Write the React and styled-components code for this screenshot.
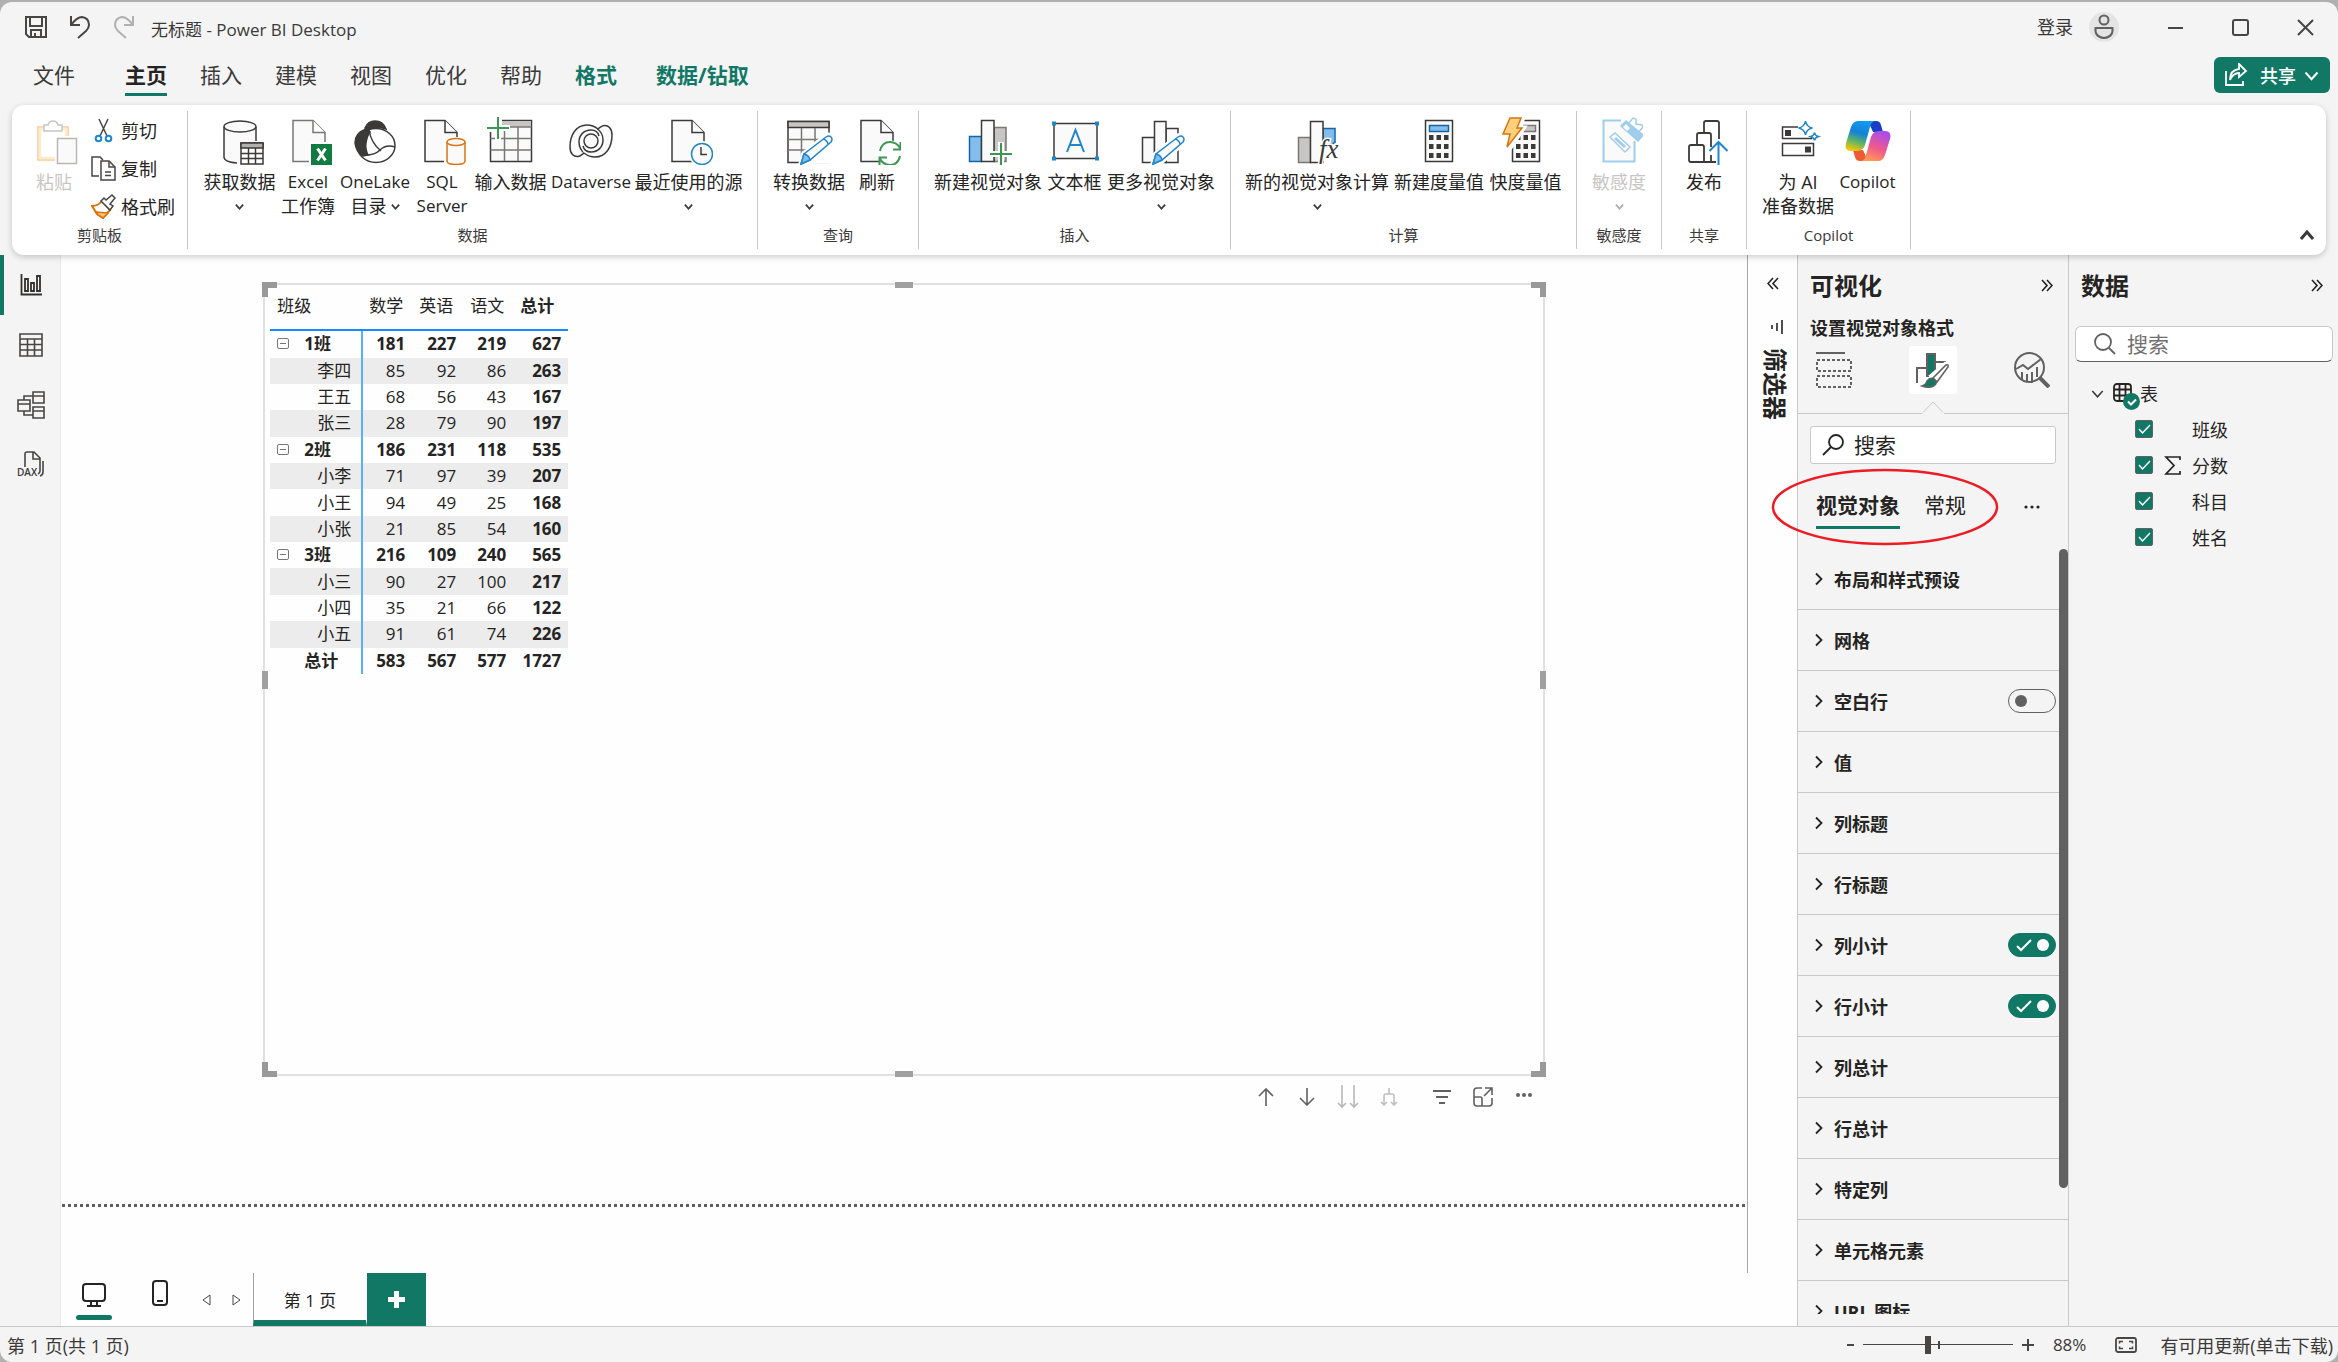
import React from 'react'
import styled, { createGlobalStyle, css } from 'styled-components'

const GREEN = '#117865'
const INK = '#252423'
const LINE = '#c8c8c8'

const GlobalStyle = createGlobalStyle`
  * { box-sizing: border-box; }
  body {
    margin: 0;
    background: #b0b0b0;
    color: ${INK};
    font-family: "Open Sans", "Noto Sans CJK SC", sans-serif;
    font-size: 18px;
  }
  button, input {
    font: inherit;
    color: inherit;
    margin: 0;
    padding: 0;
    border: none;
    background: none;
  }
  svg { display: block; flex: none; }
`

const Window = styled.div`
  display: flex;
  flex-direction: column;
  height: calc(100vh - 2px);
  margin-top: 2px;
  border-radius: 12px;
  background: #f4f4f4;
  overflow: hidden;
`

/* ---------- title bar ---------- */

const TitleBar = styled.header`
  display: flex;
  justify-content: space-between;
  padding: 13px 24px 18px 24px;
`

const QuickTools = styled.div`
  display: flex;
  align-items: flex-end;
  gap: 20px;
  height: 24px;
`

const AppTitle = styled.span`
  margin-left: -5px;
  line-height: 18px;
  font-size: 17px;
  color: #3b3a39;
`

const WindowTools = styled.div`
  display: flex;
  align-items: center;
  gap: 48px;
  height: 24px;
`

const SignIn = styled.button`
  display: flex;
  align-items: center;
  gap: 16px;
  line-height: 24px;
  color: #3b3a39;
`

/* ---------- menu ---------- */

const MenuRow = styled.div`
  display: flex;
  justify-content: space-between;
  align-items: flex-start;
  height: 48px;
  padding: 0 8px 0 33px;
`

const Menu = styled.nav`
  display: flex;
  gap: 33px;
`

const MenuTab = styled.button`
  height: 39px;
  border-bottom: 3px solid ${(p) => (p.$active ? GREEN : 'transparent')};
  font-size: 21px;
  line-height: 36px;
  font-weight: ${(p) => (p.$active || p.$context ? 700 : 400)};
  color: ${(p) => (p.$context ? GREEN : '#3b3a39')};
  ${(p) => p.$context === 'last' && css`margin-left: 6px;`}
  ${(p) => p.$first && css`margin-right: 17px;`}
  ${(p) => p.$active && css`color: ${INK};`}
`

const ShareButton = styled.button`
  display: flex;
  align-items: center;
  gap: 8px;
  height: 36px;
  padding: 0 11px 0 10px;
  border-radius: 6px;
  background: ${GREEN};
  color: #fff;
  font-weight: 500;
  white-space: nowrap;
`

const ShareText = styled.span`
  margin-left: 4px;
`

/* ---------- ribbon ---------- */

const Ribbon = styled.section`
  position: relative;
  z-index: 2;
  display: flex;
  flex: none;
  height: 150px;
  margin: 0 12px;
  padding: 6px 0;
  border-radius: 12px;
  background: #fff;
  box-shadow: 0 2px 6px rgba(0, 0, 0, 0.2);
`

const Group = styled.div`
  display: flex;
  flex-direction: column;
  justify-content: space-between;
  align-items: center;
  padding: 0 12px 4px;
  border-right: 1px solid ${LINE};
`

const GroupItems = styled.div`
  display: flex;
`

const GroupName = styled.div`
  font-size: 15px;
  line-height: 20px;
  color: #3b3a39;
`

const BigButton = styled.button`
  display: flex;
  flex-direction: column;
  align-items: center;
  width: ${(p) => p.$w}px;
  padding-top: 6px;
  gap: 5px;
  line-height: 24px;
  white-space: nowrap;
  color: ${(p) => (p.disabled ? '#c8c6c4' : INK)};
`

const LabelLine = styled.span`
  display: flex;
  align-items: center;
  justify-content: center;
  gap: 4px;
  height: 24px;
`

const Latin = styled.span`
  font-size: 17px;
`

const SmallButtons = styled.div`
  display: flex;
  flex-direction: column;
  margin-left: 7px;
`

const SmallButton = styled.button`
  display: flex;
  align-items: center;
  gap: 5px;
  height: 38px;
  white-space: nowrap;
`

const CollapseButton = styled.button`
  align-self: flex-end;
  margin-left: auto;
  padding: 6px 12px 8px;
`

/* ---------- work area ---------- */

const Work = styled.div`
  display: flex;
  flex: 1;
  min-height: 0;
`

const SideNav = styled.nav`
  width: 61px;
  flex: none;
  border-right: 1px solid #eaeaea;
`

const SideButton = styled.button`
  display: flex;
  align-items: center;
  justify-content: center;
  width: 60px;
  height: 60px;
  padding-right: 2px;
  border-left: 4px solid ${(p) => (p.$active ? GREEN : 'transparent')};
`

const Center = styled.main`
  display: flex;
  flex-direction: column;
  flex: 1;
  min-width: 0;
  background: #fefefe;
`

const Canvas = styled.div`
  display: flex;
  flex-direction: column;
  flex: 1;
  border-right: 1px solid #a8a8a8;
`

const ReportPage = styled.div`
  display: flex;
  flex-direction: column;
  flex: 1;
  width: 76%;
  margin: 0 auto;
  padding: 28px 0 86px;
`

const PageEdge = styled.div`
  height: 3px;
  margin: 0 1px 66px;
  background: repeating-linear-gradient(90deg, #605e5c 0 3px, transparent 3px 6px);
`

const Visual = styled.div`
  position: relative;
  flex: 1;
  padding: 0 5px;
  border: 2px solid #e0e0e0;
`

const Handle = styled.i`
  position: absolute;
  width: ${(p) => (p.$corner ? 15 : p.$side ? 6 : 18)}px;
  height: ${(p) => (p.$corner ? 15 : p.$side ? 18 : 6)}px;
  ${(p) => p.$at}
  ${(p) =>
    p.$corner
      ? css`
          border: 0 solid #999;
          border-width: ${p.$corner};
        `
      : css`
          background: #a0a0a0;
        `}
`

const VisualTools = styled.div`
  display: flex;
  justify-content: flex-end;
  height: 42px;
`

const ToolButton = styled.button`
  display: flex;
  align-items: center;
  justify-content: center;
  width: 41px;
  margin-left: ${(p) => (p.$gap ? 12 : 0)}px;
`

/* ---------- matrix ---------- */

const Matrix = styled.table`
  height: 389px;
  border-collapse: collapse;
  table-layout: fixed;
  width: 298px;
  font-size: 17px;
  line-height: 22px;

  th, td { padding: 0 7px; text-align: right; font-weight: 400; white-space: nowrap; }
  thead th { height: 45px; padding-bottom: 3px; text-align: left; border-bottom: 2px solid #118dff; }
  thead th:last-child, tbody td:last-child { font-weight: 700; }
  tbody th { text-align: left; border-right: 2px solid #5aaeff; }
`

const MatrixRow = styled.tr`
  background: ${(p) => (p.$shaded ? '#ececec' : 'transparent')};
  && th, && td { ${(p) => p.$bold && css`font-weight: 700;`} }
`

const RowHead = styled.div`
  display: flex;
  align-items: center;
  gap: 15px;
  padding-left: ${(p) => p.$indent}px;
`

/* ---------- page tabs ---------- */

const PageBar = styled.div`
  display: flex;
  height: 53px;
`

const LayoutButton = styled.button`
  display: flex;
  flex-direction: column;
  align-items: center;
  justify-content: flex-end;
  gap: 8px;
  width: 66px;
  padding-bottom: 6px;
  &::after {
    content: '';
    width: 36px;
    height: 5px;
    border-radius: 3px;
    background: ${(p) => (p.$active ? GREEN : 'transparent')};
  }
`

const PageArrow = styled.button`
  display: flex;
  align-items: center;
  justify-content: center;
  width: 30px;
  padding-right: 3px;
`

const PageTab = styled.button`
  width: 114px;
  padding-top: 5px;
  border-left: 1px solid #a0a0a0;
  border-right: 1px solid #fff;
  border-bottom: 6px solid ${GREEN};
  font-size: 17px;
`

const AddPage = styled.button`
  display: flex;
  align-items: center;
  justify-content: center;
  width: 59px;
  background: ${GREEN};
`

/* ---------- panes ---------- */

const FilterPane = styled.aside`
  display: flex;
  flex-direction: column;
  align-items: center;
  width: 50px;
  flex: none;
  padding-top: 22px;
  background: #fefefe;
  border-right: 1px solid ${LINE};
`

const FilterTitle = styled.h2`
  margin: 14px 0 0;
  padding-left: 4px;
  font-size: 24px;
  line-height: 28px;
  font-weight: 700;
  writing-mode: vertical-rl;
  text-orientation: sideways;
`

const FilterGlyph = styled.div`
  margin-top: 30px;
  padding-left: 8px;
`

const Pane = styled.aside`
  position: relative;
  display: flex;
  flex-direction: column;
  width: ${(p) => p.$w}px;
  flex: none;
  padding-bottom: ${(p) => p.$bottom || 0}px;
  border-right: ${(p) => (p.$last ? 'none' : `1px solid ${LINE}`)};
`

const PaneHeader = styled.div`
  display: flex;
  align-items: center;
  justify-content: space-between;
  height: 61px;
  padding: 0 15px 0 12px;
`

const PaneTitle = styled.h2`
  margin: 0;
  font-size: 24px;
  line-height: 32px;
  font-weight: 700;
`

const PaneSubtitle = styled.h3`
  margin: 0;
  padding-left: 12px;
  font-size: 18px;
  line-height: 24px;
  font-weight: 700;
`

const ModeTabs = styled.div`
  position: relative;
  display: flex;
  justify-content: space-between;
  height: 74px;
  padding: 6px 12px 19px;
  border-bottom: 1px solid ${LINE};
`

const ModeTab = styled.button`
  display: flex;
  align-items: center;
  justify-content: center;
  width: 48px;
  height: 48px;
  border-radius: 3px;
  background: ${(p) => (p.$active ? '#fff' : 'transparent')};
`

const Caret = styled.svg`
  position: absolute;
  left: 50%;
  bottom: -1px;
  margin-left: -12px;
`

const SearchBox = styled.label`
  display: flex;
  align-items: center;
  gap: ${(p) => (p.$data ? 11 : 10)}px;
  height: ${(p) => (p.$data ? 36 : 38)}px;
  margin: ${(p) => (p.$data ? '10px 5px 0 6px' : '12px 12px 0')};
  padding-left: ${(p) => (p.$data ? 18 : 11)}px;
  border: 1px solid ${LINE};
  border-radius: ${(p) => (p.$data ? 6 : 3)}px;
  background: #fff;
  ${(p) => p.$data && css`border-bottom-color: #616161;`}

  input { flex: 1; width: 100%; min-width: 0; font-size: 21px; outline: none; }
  input::placeholder { color: ${(p) => (p.$data ? '#707070' : INK)}; opacity: 1; }
`

const FormatTabs = styled.div`
  display: flex;
  align-items: center;
  gap: 24px;
  height: 85px;
  padding: 0 28px 0 18px;
`

const FormatTab = styled.button`
  height: 45px;
  border-bottom: 3px solid ${(p) => (p.$active ? GREEN : 'transparent')};
  font-size: 21px;
  line-height: 40px;
  font-weight: ${(p) => (p.$active ? 700 : 400)};
`

const MoreButton = styled.button`
  margin-left: auto;
`

const RedRing = styled.svg`
  position: absolute;
  z-index: 3;
  left: -28px;
  top: 212px;
`

const CardList = styled.div`
  flex: 1;
  min-height: 0;
  overflow: hidden;
`

const Card = styled.div`
  display: flex;
  align-items: center;
  justify-content: space-between;
  height: 61px;
  padding: 0 12px 0 17px;
  border-bottom: 1px solid ${LINE};
`

const CardButton = styled.button`
  display: flex;
  align-items: center;
  gap: 11px;
  font-weight: 700;
`

const ScrollThumb = styled.div`
  position: absolute;
  top: 294px;
  right: 0;
  width: 9px;
  height: calc(60% - 4px);
  border-radius: 5px;
  background: #616161;
`

const Switch = styled.label`
  position: relative;
  display: flex;

  input {
    appearance: none;
    width: 48px;
    height: 24px;
    border: 1px solid #616161;
    border-radius: 12px;
  }
  input:checked { background: ${GREEN}; border-color: ${GREEN}; }
  svg { position: absolute; left: 0; top: 0; pointer-events: none; }
`

const Tree = styled.div`
  display: flex;
  flex-direction: column;
  padding-top: 13px;
`

const TableRow = styled.button`
  display: flex;
  align-items: center;
  height: 36px;
  padding-left: 22px;
`

const FieldRow = styled.label`
  display: flex;
  align-items: center;
  height: 36px;
  padding-left: 66px;
`

const Check = styled.span`
  position: relative;
  display: flex;

  input {
    appearance: none;
    width: 18px;
    height: 18px;
    border: 1px solid #616161;
    border-radius: 2px;
  }
  input:checked { background: ${GREEN}; }
  svg { position: absolute; left: 0; top: 0; pointer-events: none; }
`

const FieldMark = styled.span`
  display: flex;
  align-items: center;
  justify-content: center;
  width: 39px;
`

/* ---------- status bar ---------- */

const StatusBar = styled.footer`
  display: flex;
  align-items: center;
  flex: none;
  height: 36px;
  padding: 0 5px 0 7px;
  border-top: 1px solid ${LINE};
  color: #3b3a39;
  white-space: nowrap;
`

const ZoomTools = styled.div`
  display: flex;
  align-items: center;
  gap: 9px;
  margin-left: auto;
`

const ZoomTrack = styled.label`
  position: relative;
  display: flex;
  align-items: center;
  width: 150px;
  height: 18px;

  &::after {
    content: '';
    position: absolute;
    left: 50%;
    width: 2px;
    height: 8px;
    background: #484644;
  }
  input {
    appearance: none;
    width: 100%;
    height: 1px;
    background: #484644;
  }
  input::-webkit-slider-thumb {
    appearance: none;
    width: 6px;
    height: 18px;
    background: #484644;
  }
`

const ZoomValue = styled.span`
  margin: 0 20px 0 10px;
  font-size: 17px;
`

const UpdateLink = styled.a`
  margin-left: 14px;
  color: inherit;
  text-decoration: none;
`

/* ---------- drawings ---------- */

const Svg = ({ w = 24, h = w, box, c = '#484644', s = 2, children, ...rest }) => (
  <svg width={w} height={h} viewBox={box || `0 0 ${w} ${h}`} fill="none" stroke={c} strokeWidth={s} {...rest}>
    {children}
  </svg>
)

const Big = ({ children }) => (
  <Svg w={48} s={1.5} c="#3b3a39">{children}</Svg>
)

const ChevronDown = ({ w = 9, s = 2, c = '#3b3a39' }) => (
  <Svg w={w} h={w} box="0 0 10 10" s={s} c={c}><path d="M1 3l4 4.500 4-4.500" /></Svg>
)

const ChevronRight = () => (
  <Svg w={8} h={14} s={1.8} c={INK}><path d="M1 1.500l5.500 5.500L1 12.500" /></Svg>
)

const DoubleChevron = ({ left }) => (
  <Svg w={12} h={13} s={1.6} c={INK}>
    {left ? <path d="M6 1L1 6.500l5 5.500M11 1L6 6.500l5 5.500" /> : <path d="M1 1l5 5.500L1 12M6 1l5 5.500L6 12" />}
  </Svg>
)

const Doc = ({ x, c }) => (
  <g stroke={c}>
    <path d={`M${x} 3.500h20l12 12v29h-32z`} fill="#fafafa" />
    <path d={`M${x + 20} 3.500v12h12`} fill="#fff" />
  </g>
)

const Pencil = () => (
  <g stroke="#1f86cc">
    <path d="M15 48l3-11 22-18q4-3 7 0t0 7L25 45z" fill="#fff" stroke="#fff" strokeWidth="4" />
    <path d="M16 47l3-10 22-17q3-2 5 0t0 5L25 43z" fill="#fafafa" />
    <path d="M16 47l3-10q5 1 6 6z" fill="#83bdec" />
    <path d="M38 22q4 1 5 5" />
  </g>
)

const Plus = ({ x, y }) => (
  <g>
    <path d={`M${x - 12} ${y}h24M${x} ${y - 12}v24`} stroke="#fff" strokeWidth="6" />
    <path d={`M${x - 11} ${y}h22M${x} ${y - 11}v22`} stroke="#3c9750" strokeWidth="2" />
  </g>
)

const CalcBody = ({ bar = '#83bdec', barLine = '#1664a8' }) => (
  <g>
    <path d="M10.500 3.500h27v41h-27z" fill="#fafafa" />
    <path d="M14.500 8.500h19v6h-19z" fill={bar} stroke={barLine} />
    <path d="M14 20.500h20M14 29.500h20M14 38.500h20" strokeWidth="5" strokeDasharray="4.500 3" />
  </g>
)

// one arm of the Dataverse swirl, the other is the same turned round
const Swirl = () => (
  <g>
    <path d="M31 12Q26 8 20 8C9 8 3 18 3 30c0 7 4 10 8 9.500 3-.5 4-2.500 6.500-3.500C13 33 12 28 12 25c0-7 5-12 12-12 5 0 9 3 11 7z" fill="#fafafa" stroke="none" />
    <path d="M31 12Q26 8 20 8C9 8 3 18 3 30c0 7 4 10 8 9.500 3-.5 4-2.500 6.500-3.500" />
    <path d="M18 36.500C13 33 12 28 12 25c0-7 5-12 12-12 4 0 7 2 8 6" />
  </g>
)

const icons = {
  paste: (
    <Big>
      <path d="M8 10h30v33H8z" fill="#fff" stroke="#f7c998" />
      <path d="M10 12h26v29H10z" stroke="#fdeccc" strokeWidth="2.500" />
      <path d="M14 14V8h4q1-4 5-4t5 4h4v6z" fill="#fff" stroke="#c8c6c4" />
      <path d="M25 19h23v29H25z" fill="#fff" stroke="none" />
      <path d="M27.500 21.500h19v25h-19z" fill="#fafafa" stroke="#b8b6b4" />
    </Big>
  ),
  getData: (
    <Big>
      <path d="M8 10v30q0 6 16 6V26h16V10z" fill="#fafafa" stroke="none" />
      <ellipse cx="24" cy="9.500" rx="16" ry="5.500" fill="#fafafa" />
      <path d="M8 10v30q0 5 13 6M40 10v14" />
      <path d="M25 26h22v21H25z" fill="#fff" />
      <path d="M25 26h22v5H25z" fill="#b3b0ad" />
      <path d="M25 36.500h22M25 41.500h22M32.500 31v16M39.500 31v16" />
    </Big>
  ),
  excel: (
    <Big>
      <Doc x={9} c="#797775" />
      <path d="M25 25h23v23H25z" fill="#fff" stroke="none" />
      <path d="M27 27h21v21H27z" fill="#107c41" stroke="none" />
      <path d="M33.500 31.500l8 12M41.500 31.500l-8 12" stroke="#fff" strokeWidth="3" />
    </Big>
  ),
  onelake: (
    <Big>
      <ellipse cx="25" cy="28.500" rx="19" ry="17" fill="#fff" />
      <path d="M14 11q3-7 10-7 8 0 11 8-9-3-18 0z" fill="#3b3a39" />
      <path d="M15 12Q4 16 4 26q1 9 8 13l5-1q-3-6-2-12 1-7 4-11z" fill="#3b3a39" />
      <path d="M18 13q2 13 12 21M11 38q12 1 18-5t15-3" />
    </Big>
  ),
  sql: (
    <Big>
      <Doc x={7} c="#3b3a39" />
      <path d="M26 20h22v28H26z" fill="#fff" stroke="none" />
      <path d="M29 25v19q0 3.500 9 3.500t9-3.500V25" fill="#fafafa" stroke="#d9730d" />
      <ellipse cx="38" cy="25" rx="9" ry="3.500" fill="#fafafa" stroke="#d9730d" />
    </Big>
  ),
  enterData: (
    <Big>
      <path d="M3.500 3.500h41v41h-41z" fill="#fafafa" />
      <path d="M4 4h40v6H4z" fill="#c8c6c4" stroke="none" />
      <path d="M3.500 10h41M3.500 21.500h41M3.500 33h41M17.500 10v34M31 10v34" stroke="#797775" />
      <path d="M0 0h15v15H0z" fill="#fff" stroke="none" />
      <Plus x={11} y={11} />
    </Big>
  ),
  dataverse: (
    <Big>
      <Swirl />
      <g transform="rotate(180 24 24)"><Swirl /></g>
      <circle cx="24" cy="24" r="7" fill="#fafafa" />
    </Big>
  ),
  recent: (
    <Big>
      <Doc x={7} c="#3b3a39" />
      <circle cx="37" cy="37" r="13" fill="#fff" stroke="none" />
      <circle cx="37" cy="37" r="10.500" fill="#fafafa" stroke="#1f86cc" />
      <path d="M36 30v7.500h6" />
    </Big>
  ),
  transform: (
    <Big>
      <path d="M3 4.500h41v41H3z" fill="#fafafa" />
      <path d="M3 4.500h41v6H3z" fill="#c8c6c4" />
      <path d="M3 22.500h40M3 33h40M16.500 11v34M30 11v34" stroke="#797775" />
      <path d="M27 46h20V24z" fill="#fff" stroke="#fff" />
      <Pencil />
    </Big>
  ),
  refresh: (
    <Big>
      <Doc x={8} c="#3b3a39" />
      <circle cx="37" cy="36.500" r="13" fill="#fff" stroke="none" />
      <path d="M27 34q2-9 10-9 7 0 10.500 7M47.500 25v7.500H40M47 39q-2 9-10 9-7 0-10.500-7M26.500 48v-7.500H34" stroke="#3c9750" strokeWidth="2" />
    </Big>
  ),
  newVisual: (
    <Big>
      <path d="M5.500 19.500h12v25h-12z" fill="#83bdec" stroke="#1664a8" />
      <path d="M30 10.500h12v34H30z" fill="#c8c6c4" stroke="#797775" />
      <path d="M17.500 3.500H30v41H17.500z" fill="#fafafa" />
      <Plus x={37} y={37} />
    </Big>
  ),
  textBox: (
    <Big>
      <path d="M3 6.500h43v35H3z" fill="#fafafa" />
      <path d="M1 4.500h4v4H1zM44 4.500h4v4h-4zM1 39.500h4v4H1zM44 39.500h4v4h-4z" fill="#1f86cc" stroke="none" />
      <path d="M16 35l8.500-22L33 35M18.500 28h12" stroke="#1f86cc" strokeWidth="2" />
    </Big>
  ),
  moreVisuals: (
    <Big>
      <path d="M5.500 20.500h12v25h-12zM29 11.500h12v34H29z" fill="#fafafa" />
      <path d="M17.500 4.500H29v41H17.500z" fill="#fafafa" />
      <Pencil />
    </Big>
  ),
  visualCalc: (
    <Big>
      <path d="M5.500 20.500h12v25h-12z" fill="#c8c6c4" stroke="#797775" />
      <path d="M30 11.500h12v14L34 30h-4z" fill="#83bdec" stroke="#1664a8" />
      <path d="M17.500 4.500H30v41H17.500z" fill="#fafafa" />
      <text x="26" y="41" fill="#3b3a39" stroke="#fff" strokeWidth="3" paintOrder="stroke" fontFamily="Liberation Serif, serif" fontStyle="italic" fontSize="27">fx</text>
    </Big>
  ),
  measure: <Big><CalcBody /></Big>,
  quickMeasure: (
    <Big>
      <CalcBody bar="#c8c6c4" barLine="#797775" />
      <path d="M8 0h14l-3 10h4L9 31H8V0z" fill="#fff" stroke="#fff" strokeWidth="3" />
      <path d="M8 1h11l-4 10h5L5 30l3-13H1z" fill="#fdd17c" stroke="#d9730d" />
    </Big>
  ),
  sensitivity: (
    <Big>
      <path d="M26 3.500H8.500v41h31V24" fill="#fafafa" stroke="#9fcdeb" strokeWidth="2" />
      <g stroke="#9fcdeb">
        <path d="M15 20l5-4 15 14-5 5z" fill="#fff" />
        <path d="M20 21l10 9" strokeWidth="3" />
        <path d="M33 7l5-6 3 1 0 5 6 1 1 2-5 6z" fill="#fff" />
        <path d="M26 9l5-5 17 14-5 6z" fill="#9fcdeb" />
        <path d="M28 10l3-3 4 4-3 3z" fill="#fff" stroke="none" />
      </g>
    </Big>
  ),
  publish: (
    <Big>
      <g strokeWidth="1.800">
        <path d="M39 22V6q0-2-2-2H26q-2 0-2 2v10" />
        <path d="M31 30V18q0-2-2-2H19q-2 0-2 2v10" />
        <path d="M24 45V30q0-2-2-2H11q-2 0-2 2v13q0 2 2 2h25" />
        <path d="M31 38v7" />
      </g>
      <path d="M38.500 48V25M29.500 34l9-9 9 9" stroke="#1f86cc" strokeWidth="2" />
    </Big>
  ),
  prepAi: (
    <Big>
      <path d="M24 10H8.500v11.500h29V20M8.500 26.500h31v12h-31z" />
      <path d="M11 13h6v6h-6zM31 29.500h6v6h-6z" fill="#3b3a39" stroke="none" />
      <path d="M31.500 4q1 6 7 7-6 1-7 7-1-6-7-7 6-1 7-7zM40.500 15.500q.5 3 4 4-3.500 1-4 4-.5-3-4-4 3.500-1 4-4z" fill="#fff" stroke="#1f86cc" />
    </Big>
  ),
  copilot: (
    <Svg w={48} s={0}>
      <defs>
        <linearGradient id="cpA" x1="0.600" y1="0" x2="0.300" y2="1">
          <stop offset="0" stopColor="#0f9bf0" /><stop offset="0.400" stopColor="#1482d8" />
          <stop offset="0.700" stopColor="#5fb564" /><stop offset="1" stopColor="#f5c60a" />
        </linearGradient>
        <linearGradient id="cpB" x1="0.700" y1="0" x2="0.300" y2="1">
          <stop offset="0" stopColor="#a74df0" /><stop offset="0.550" stopColor="#f0588a" /><stop offset="1" stopColor="#ff9b52" />
        </linearGradient>
      </defs>
      <path d="M24 4h8q4 0 5 4l2 7H29z" fill="#1a3fc4" />
      <path d="M24 44h-8q-4 0-5-4l-2-7h10z" fill="#ee5a35" />
      <path d="M14 4h17q-4 1-5 6l-5 18q-2 6-8 6H7q-7 0-5-8L7 10q2-6 7-6z" fill="url(#cpA)" />
      <path d="M34 44H17q4-1 5-6l5-18q2-6 8-6h6q7 0 5 8l-5 16q-2 6-7 6z" fill="url(#cpB)" />
    </Svg>
  ),
  cut: (
    <Svg w={25} s={1.5}>
      <path d="M8 1l8 17M17 1L9 18" />
      <circle cx="7.500" cy="20.500" r="2.800" stroke="#1f86cc" strokeWidth="2" />
      <circle cx="17.500" cy="20.500" r="2.800" stroke="#1f86cc" strokeWidth="2" />
    </Svg>
  ),
  copy: (
    <Svg w={25} s={1.5}>
      <path d="M8 20H1V1h8l3 3" />
      <path d="M10 5h8l6 6v13H10z" fill="#fafafa" /><path d="M18 5v6h6M14 16h6M14 19.500h6" />
    </Svg>
  ),
  painter: (
    <Svg w={25} s={1.5}>
      <path d="M11 7Q7 12 1 12l5 8 6 4 7-8z" fill="#fff" stroke="#d9730d" strokeWidth="2" />
      <path d="M5 18l12 1-5 5-5-3z" fill="#fdc26b" stroke="#d9730d" />
      <path d="M10 7l9 9 3-4-3-2 5-6-3-3-6 5-2-2z" fill="#fafafa" />
    </Svg>
  ),
}

const ribbonGroups = [
  {
    name: '数据',
    items: [
      { icon: 'getData', w: 79, lines: ['获取数据'], menu: true },
      { icon: 'excel', w: 58, lines: ['Excel', '工作簿'] },
      { icon: 'onelake', w: 76, lines: ['OneLake', '目录'], inlineMenu: true },
      { icon: 'sql', w: 58, lines: ['SQL', 'Server'] },
      { icon: 'enterData', w: 79, lines: ['输入数据'] },
      { icon: 'dataverse', w: 82, lines: ['Dataverse'] },
      { icon: 'recent', w: 113, lines: ['最近使用的源'], menu: true },
    ],
  },
  {
    name: '查询',
    items: [
      { icon: 'transform', w: 78, lines: ['转换数据'], menu: true },
      { icon: 'refresh', w: 58, lines: ['刷新'] },
    ],
  },
  {
    name: '插入',
    items: [
      { icon: 'newVisual', w: 114, lines: ['新建视觉对象'] },
      { icon: 'textBox', w: 59, lines: ['文本框'] },
      { icon: 'moreVisuals', w: 114, lines: ['更多视觉对象'], menu: true },
    ],
  },
  {
    name: '计算',
    items: [
      { icon: 'visualCalc', w: 148, lines: ['新的视觉对象计算'], menu: true },
      { icon: 'measure', w: 96, lines: ['新建度量值'] },
      { icon: 'quickMeasure', w: 77, lines: ['快度量值'] },
    ],
  },
  { name: '敏感度', items: [{ icon: 'sensitivity', w: 60, lines: ['敏感度'], menu: true, disabled: true }] },
  { name: '共享', items: [{ icon: 'publish', w: 60, lines: ['发布'] }] },
  {
    name: 'Copilot',
    items: [
      { icon: 'prepAi', w: 78, lines: ['为 AI', '准备数据'] },
      { icon: 'copilot', w: 61, lines: ['Copilot'] },
    ],
  },
]

const rows = [
  { name: '1班', group: true, v: [181, 227, 219, 627] },
  { name: '李四', v: [85, 92, 86, 263] },
  { name: '王五', v: [68, 56, 43, 167] },
  { name: '张三', v: [28, 79, 90, 197] },
  { name: '2班', group: true, v: [186, 231, 118, 535] },
  { name: '小李', v: [71, 97, 39, 207] },
  { name: '小王', v: [94, 49, 25, 168] },
  { name: '小张', v: [21, 85, 54, 160] },
  { name: '3班', group: true, v: [216, 109, 240, 565] },
  { name: '小三', v: [90, 27, 100, 217] },
  { name: '小四', v: [35, 21, 66, 122] },
  { name: '小五', v: [91, 61, 74, 226] },
  { name: '总计', total: true, v: [583, 567, 577, 1727] },
]

const cards = [
  { name: '布局和样式预设' },
  { name: '网格' },
  { name: '空白行', toggle: 'off' },
  { name: '值' },
  { name: '列标题' },
  { name: '行标题' },
  { name: '列小计', toggle: 'on' },
  { name: '行小计', toggle: 'on' },
  { name: '列总计' },
  { name: '行总计' },
  { name: '特定列' },
  { name: '单元格元素' },
  { name: 'URL 图标' },
]

const fields = [{ name: '班级' }, { name: '分数', sum: true }, { name: '科目' }, { name: '姓名' }]

const isLatin = (text) => /^[A-Za-z]+$/.test(text)

function RibbonButton({ icon, w, lines, menu, inlineMenu, disabled }) {
  const chevronColor = disabled ? '#b0aeac' : '#3b3a39'
  return (
    <BigButton $w={w} disabled={disabled}>
      {icons[icon]}
      <span>
        {lines.map((line, i) => (
          <LabelLine key={line}>
            {isLatin(line) ? <Latin>{line}</Latin> : line}
            {inlineMenu && i === lines.length - 1 && <ChevronDown />}
          </LabelLine>
        ))}
        {menu && <LabelLine><ChevronDown c={chevronColor} /></LabelLine>}
      </span>
    </BigButton>
  )
}

function TopBars() {
  return (
    <>
      <TitleBar>
        <QuickTools>
          <button aria-label="保存">
            <Svg w={24}><path d="M2 2h20v20H5l-3-3zM6 2v9h12V2M7 22v-7h10v7M11 18v4" /></Svg>
          </button>
          <button aria-label="撤消">
            <Svg w={24}><path d="M3 1v9h9M3 10q6-8 11-8 7 1 7 8 0 3-3 6l-8 7" /></Svg>
          </button>
          <button aria-label="恢复">
            <Svg w={24} c="#b0b0b0"><path d="M21 1v9h-9M21 10q-6-8-11-8-7 1-7 8 0 3 3 6l8 7" /></Svg>
          </button>
          <AppTitle>无标题 - Power BI Desktop</AppTitle>
        </QuickTools>
        <WindowTools>
          <SignIn>
            登录
            <Svg w={30} s={2} c="#616161">
              <circle cx="15" cy="15" r="15" fill="#e4e4e4" stroke="none" />
              <circle cx="15" cy="8" r="4.500" />
              <path d="M6.500 16h17q1 9-8.500 10-9.500-1-8.500-10z" />
            </Svg>
          </SignIn>
          <button aria-label="最小化"><Svg w={17} s={2}><path d="M1 9h15" /></Svg></button>
          <button aria-label="最大化"><Svg w={17} s={2}><rect x="1" y="1" width="15" height="15" rx="2" /></Svg></button>
          <button aria-label="关闭"><Svg w={17} s={2}><path d="M1 1l15 15M16 1L1 16" /></Svg></button>
        </WindowTools>
      </TitleBar>

      <MenuRow>
        <Menu>
          <MenuTab $first>文件</MenuTab>
          <MenuTab $active>主页</MenuTab>
          <MenuTab>插入</MenuTab>
          <MenuTab>建模</MenuTab>
          <MenuTab>视图</MenuTab>
          <MenuTab>优化</MenuTab>
          <MenuTab>帮助</MenuTab>
          <MenuTab $context="first">格式</MenuTab>
          <MenuTab $context="last">数据/钻取</MenuTab>
        </Menu>
        <ShareButton>
          <Svg w={24} c="#fff" s={1.8}>
            <path d="M2 8v14h17v-4M15 1l7 7-7 6v-4q-6 0-9 7 0-10 9-11z" />
          </Svg>
          <ShareText>共享</ShareText>
          <ChevronDown w={15} s={1.3} c="#fff" />
        </ShareButton>
      </MenuRow>
    </>
  )
}

function RibbonBar() {
  return (
    <Ribbon>
      <Group>
        <GroupItems>
          <BigButton $w={60} disabled>
            {icons.paste}
            <LabelLine>粘贴</LabelLine>
          </BigButton>
          <SmallButtons>
            <SmallButton>{icons.cut}剪切</SmallButton>
            <SmallButton>{icons.copy}复制</SmallButton>
            <SmallButton>{icons.painter}格式刷</SmallButton>
          </SmallButtons>
        </GroupItems>
        <GroupName>剪贴板</GroupName>
      </Group>
      {ribbonGroups.map((group) => (
        <Group key={group.name}>
          <GroupItems>
            {group.items.map((item) => <RibbonButton key={item.icon} {...item} />)}
          </GroupItems>
          <GroupName>{group.name}</GroupName>
        </Group>
      ))}
      <CollapseButton aria-label="折叠功能区">
        <Svg w={14} h={12} s={3} c="#3b3a39"><path d="M1 10l6-7 6 7" /></Svg>
      </CollapseButton>
    </Ribbon>
  )
}

function Views() {
  return (
    <SideNav>
      <SideButton $active aria-label="报表视图">
        <Svg w={22} s={1.8} c="#323130"><path d="M1.500 0v20.500H22M5 5h3v12H5zM11 9h3v8h-3zM17 2h3v15h-3z" /></Svg>
      </SideButton>
      <SideButton aria-label="表格视图">
        <Svg w={24} s={1.6}><path d="M1 1h22v22H1zM1 6h22M1 11.500h22M1 17h22M8.500 6v17M15.500 6v17" /></Svg>
      </SideButton>
      <SideButton aria-label="模型视图">
        <Svg w={28} s={1.6}>
          <path d="M1 9h12v11H1zM1 13h12M16 1h11v11H16zM16 5h11M16 16h11v11H16zM16 20h11M7 9V5h9M7 20v4h9" />
        </Svg>
      </SideButton>
      <SideButton aria-label="DAX 查询视图">
        <Svg w={28} s={1.6}>
          <path d="M8 16V3q0-2 2-2h7l6 6v13q0 2-2 3M16 1v7h7M26 10v11q0 3-3 4" />
          <text x="0" y="25" fill="#3b3a39" stroke="none" fontFamily="Open Sans, sans-serif" fontWeight="600" fontSize="10">DAX</text>
        </Svg>
      </SideButton>
    </SideNav>
  )
}

function MatrixTable() {
  return (
    <Matrix>
      <colgroup>
        <col width="92" /><col width="50" /><col width="51" /><col width="50" /><col width="55" />
      </colgroup>
      <thead>
        <tr>
          <th>班级</th><th>数学</th><th>英语</th><th>语文</th><th>总计</th>
        </tr>
      </thead>
      <tbody>
        {rows.map((row, i) => (
          <MatrixRow key={row.name} $bold={row.group || row.total} $shaded={i % 2 === 1}>
            <th scope="row">
              <RowHead $indent={row.group ? 0 : row.total ? 27 : 40}>
                {row.group && (
                  <Svg w={12} s={1} c="#797775"><rect x="0.500" y="0.500" width="11" height="10" rx="1.500" /><path d="M3 5.500h6" /></Svg>
                )}
                {row.name}
              </RowHead>
            </th>
            {row.v.map((value, j) => <td key={j}>{value}</td>)}
          </MatrixRow>
        ))}
      </tbody>
    </Matrix>
  )
}

function Report() {
  return (
    <Center>
      <Canvas>
        <ReportPage>
          <Visual>
            <MatrixTable />
            <Handle $corner="6px 0 0 6px" $at="left: -3px; top: -3px;" />
            <Handle $corner="6px 6px 0 0" $at="right: -3px; top: -3px;" />
            <Handle $corner="0 0 6px 6px" $at="left: -3px; bottom: -3px;" />
            <Handle $corner="0 6px 6px 0" $at="right: -3px; bottom: -3px;" />
            <Handle $at="left: calc(50% - 9px); top: -3px;" />
            <Handle $at="left: calc(50% - 9px); bottom: -3px;" />
            <Handle $side $at="left: -3px; top: calc(50% - 9px);" />
            <Handle $side $at="right: -3px; top: calc(50% - 9px);" />
          </Visual>
          <VisualTools>
            <ToolButton aria-label="向上钻取"><Svg w={18} s={1.6} c="#616161"><path d="M9 18V1M2 8l7-7 7 7" /></Svg></ToolButton>
            <ToolButton aria-label="向下钻取"><Svg w={18} s={1.6} c="#616161"><path d="M9 0v17M2 10l7 7 7-7" /></Svg></ToolButton>
            <ToolButton aria-label="下一级别"><Svg w={22} h={24} s={1.6} c="#b8b8b8"><path d="M5 0v22M1 18l4 4 4-4M17 0v22M13 18l4 4 4-4" /></Svg></ToolButton>
            <ToolButton aria-label="展开"><Svg w={18} s={1.6} c="#c0c0c0"><path d="M9 0v6M4 17V8q0-2 2-2h6q2 0 2 2v9M1 14l3 3 3-3M11 14l3 3 3-3" /></Svg></ToolButton>
            <ToolButton $gap aria-label="筛选器"><Svg w={18} s={2} c="#616161"><path d="M0 3h18M3 9h12M6 15h6" /></Svg></ToolButton>
            <ToolButton aria-label="焦点模式">
              <Svg w={20} s={1.6} c="#616161"><path d="M9 1H4Q1 1 1 4v12q0 3 3 3h12q3 0 3-3v-5M12 1h7v7M19 1l-8 8M1 10h6q2 0 2 2v7" /></Svg>
            </ToolButton>
            <ToolButton aria-label="更多选项">
              <Svg w={18} s={0}><g fill="#616161"><circle cx="3" cy="7" r="2" /><circle cx="9" cy="7" r="2" /><circle cx="15" cy="7" r="2" /></g></Svg>
            </ToolButton>
          </VisualTools>
        </ReportPage>
        <PageEdge />
      </Canvas>
      <PageBar>
        <LayoutButton $active aria-label="桌面布局">
          <Svg w={24} c={INK}><rect x="1" y="1" width="22" height="17" rx="3" /><path d="M9 18v5M15 18v5M5 23h14" /></Svg>
        </LayoutButton>
        <LayoutButton aria-label="移动布局">
          <Svg w={18} h={28} c={INK}><rect x="2" y="2" width="14" height="24" rx="3" /><path d="M6 22h6" /></Svg>
        </LayoutButton>
        <PageArrow aria-label="上一页"><Svg w={9} h={12} s={1}><path d="M8 1v10L1 6z" /></Svg></PageArrow>
        <PageArrow aria-label="下一页"><Svg w={9} h={12} s={1}><path d="M1 1v10l7-5z" /></Svg></PageArrow>
        <PageTab>第 1 页</PageTab>
        <AddPage aria-label="新建页"><Svg w={17} s={5} c="#fff"><path d="M8.500 0v17M0 8.500h17" /></Svg></AddPage>
      </PageBar>
    </Center>
  )
}

function Toggle({ label, on }) {
  return (
    <Switch>
      <input type="checkbox" role="switch" aria-label={label} defaultChecked={on} />
      <Svg w={48} h={24}>
        {on ? (
          <>
            <path d="M9 13l4 4 10-10" stroke="#fff" />
            <circle cx="35" cy="12" r="6" fill="#fff" stroke="none" />
          </>
        ) : (
          <circle cx="13" cy="12" r="6" fill="#616161" stroke="none" />
        )}
      </Svg>
    </Switch>
  )
}

function FormatPane() {
  return (
    <Pane $w={271} $bottom={12}>
      <PaneHeader>
        <PaneTitle>可视化</PaneTitle>
        <button aria-label="折叠可视化"><DoubleChevron /></button>
      </PaneHeader>
      <PaneSubtitle>设置视觉对象格式</PaneSubtitle>
      <ModeTabs>
        <ModeTab aria-label="添加数据">
          <Svg w={36} c="#616161">
            <path d="M0 1h29" /><path d="M1 8h34v11H1zM1 24h34v11H1z" strokeDasharray="3 2" />
          </Svg>
        </ModeTab>
        <ModeTab $active aria-label="设置格式">
          <Svg w={36} c="#616161">
            <path d="M2 31V16h9M20 10h11" />
            <path d="M12 2h8v22h-8z" fill={GREEN} />
            <path d="M17 24L31 12q3-1 2 2L22 29z" fill="#fff" stroke="#fff" strokeWidth="5" />
            <path d="M18 26l13-13q3-1 2 2L22 30z" fill="#fff" strokeWidth="1.600" />
            <path d="M7 34q4-1 5-5 3-4 7-2 4 3 1 6-4 4-13 1z" fill={GREEN} strokeWidth="1.500" />
          </Svg>
        </ModeTab>
        <ModeTab aria-label="分析">
          <Svg w={36} c="#616161">
            <circle cx="15.500" cy="15.500" r="14.500" />
            <path d="M2 17l7-4 5 4L27 7M8 20v7M13 22v7M18 20v9M23 15v10" />
            <path d="M26 26l9 9" strokeWidth="4" />
          </Svg>
        </ModeTab>
        <Caret width="24" height="13" viewBox="0 0 24 13">
          <path d="M0 12.500h1L12 1l11 11.500h1" fill="#f4f4f4" stroke={LINE} />
          <path d="M1 12.500h22" stroke="#f4f4f4" strokeWidth="2" />
        </Caret>
      </ModeTabs>
      <SearchBox>
        <Svg w={22} s={1.8} c={INK}><circle cx="14" cy="8" r="7" /><path d="M9 13l-8 8" /></Svg>
        <input type="search" placeholder="搜索" aria-label="搜索格式设置" />
      </SearchBox>
      <FormatTabs>
        <FormatTab $active>视觉对象</FormatTab>
        <FormatTab>常规</FormatTab>
        <MoreButton aria-label="更多">
          <Svg w={16} h={4} s={0}><g fill={INK}><circle cx="2" cy="2" r="1.600" /><circle cx="8" cy="2" r="1.600" /><circle cx="14" cy="2" r="1.600" /></g></Svg>
        </MoreButton>
      </FormatTabs>
      <CardList>
        {cards.map((card) => (
          <Card key={card.name}>
            <CardButton><ChevronRight />{card.name}</CardButton>
            {card.toggle && <Toggle label={card.name} on={card.toggle === 'on'} />}
          </Card>
        ))}
      </CardList>
      <ScrollThumb />
      <RedRing width="230" height="80" viewBox="0 0 230 80">
        <ellipse cx="115" cy="40" rx="112" ry="37" fill="none" stroke="#ed1c24" strokeWidth="2.500" />
      </RedRing>
    </Pane>
  )
}

function DataPane() {
  return (
    <Pane $w={269} $last>
      <PaneHeader>
        <PaneTitle>数据</PaneTitle>
        <button aria-label="折叠数据"><DoubleChevron /></button>
      </PaneHeader>
      <SearchBox $data>
        <Svg w={22} s={1.8} c="#616161"><circle cx="9" cy="9" r="8" /><path d="M15 15l6 6" /></Svg>
        <input type="search" placeholder="搜索" aria-label="搜索字段" />
      </SearchBox>
      <Tree>
        <TableRow>
          <ChevronDown w={13} s={1.2} />
          <Svg w={36} h={38} box="-9 -9 36 38" s={1.8} c={INK}>
            <rect x="1" y="1" width="17" height="17" rx="3" /><path d="M1 6.500h17M1 12.500h17M6.500 1v17M12.500 1v17" />
            <circle cx="18.500" cy="18.500" r="8.500" fill={GREEN} stroke="none" />
            <path d="M15 18.500l3 3 5-5" stroke="#fff" strokeWidth="2" />
          </Svg>
          表
        </TableRow>
        {fields.map((field) => (
          <FieldRow key={field.name}>
            <Check>
              <input type="checkbox" defaultChecked />
              <Svg w={18} s={1.5} c="#fff"><path d="M4 9l3.500 4L15 5" /></Svg>
            </Check>
            <FieldMark>
              {field.sum && <Svg w={17} h={19} s={1.7} c={INK}><path d="M16 4V1H2l8 8.500L2 18h14v-3" /></Svg>}
            </FieldMark>
            {field.name}
          </FieldRow>
        ))}
      </Tree>
    </Pane>
  )
}

function App() {
  return (
    <>
      <GlobalStyle />
      <Window>
        <TopBars />
        <RibbonBar />
        <Work>
          <Views />
          <Report />
          <FilterPane>
            <button aria-label="展开筛选器"><DoubleChevron left /></button>
            <FilterGlyph>
              <Svg w={12} h={14} s={1.6} c={INK}><path d="M1 5v4M6 3v8M11 0v14" /></Svg>
            </FilterGlyph>
            <FilterTitle>筛选器</FilterTitle>
          </FilterPane>
          <FormatPane />
          <DataPane />
        </Work>
        <StatusBar>
          <span>第 1 页(共 1 页)</span>
          <ZoomTools>
            <button aria-label="缩小"><Svg w={7} h={10} s={2}><path d="M0 5h7" /></Svg></button>
            <ZoomTrack>
              <input type="range" min="0" max="100" defaultValue="43" aria-label="缩放" />
            </ZoomTrack>
            <button aria-label="放大"><Svg w={12} s={2}><path d="M6 0v12M0 6h12" /></Svg></button>
            <ZoomValue>88%</ZoomValue>
            <button aria-label="调整到页面大小">
              <Svg w={22} h={16} s={1.8}>
                <rect x="1" y="1" width="20" height="14" rx="2" />
                <path d="M4.500 6.500v-2H8M14 4.500h3.500v2M4.500 9.500v2H8M14 11.500h3.500v-2" strokeWidth="1.500" />
              </Svg>
            </button>
            <UpdateLink href="#update">有可用更新(单击下载)</UpdateLink>
          </ZoomTools>
        </StatusBar>
      </Window>
    </>
  )
}

export default App
